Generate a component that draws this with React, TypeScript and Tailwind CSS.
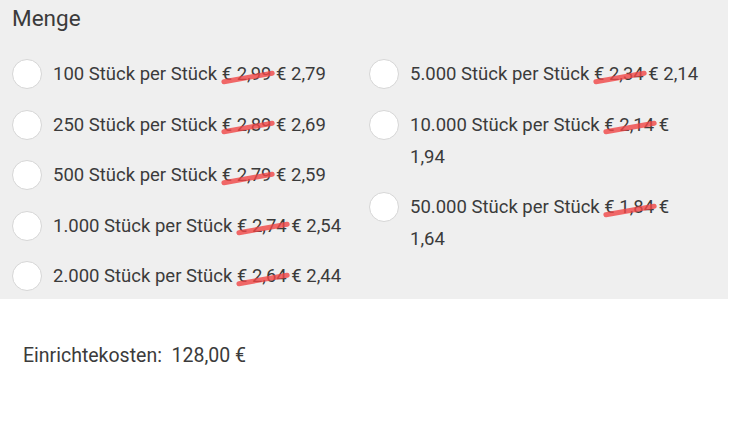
import React from 'react';

type Tier = { qty: string; old: string; price: string };

const LEFT: Tier[] = [
    { qty: '100', old: '2,99', price: '2,79' },
    { qty: '250', old: '2,89', price: '2,69' },
    { qty: '500', old: '2,79', price: '2,59' },
    { qty: '1.000', old: '2,74', price: '2,54' },
    { qty: '2.000', old: '2,64', price: '2,44' },
];

const RIGHT: Tier[] = [
    { qty: '5.000', old: '2,34', price: '2,14' },
    { qty: '10.000', old: '2,14', price: '1,94' },
    { qty: '50.000', old: '1,84', price: '1,64' },
];

const TierOption: React.FC<{ tier: Tier }> = ({ tier }) => (
    <label className="flex items-start gap-[11px] cursor-pointer">
        <span className="mt-px w-[30px] h-[30px] shrink-0 rounded-full bg-white border border-[#d6d6d6]" />
        <span className="leading-[32px] max-w-[296px]">
            {tier.qty} Stück per Stück{' '}
            <span className="relative inline-block">
                € {tier.old}
                <span className="absolute left-[-1px] right-[-3px] top-[52%] h-[4.5px] rounded-full bg-[#f04545]/80 -rotate-[10deg]" />
            </span>{' '}
            € {tier.price}
        </span>
    </label>
);

const App: React.FC = () => {
    return (
        <div className="w-[730px] h-[425px] bg-white text-[#3b3b3b] text-[18.5px] font-['Roboto',sans-serif]">

            {/* Quantity selection */}
            <div className="w-[728px] h-[299px] bg-[#efefef] pl-3 pt-[5px]">
                <h2 className="text-[22.5px] leading-[26px]">Menge</h2>
                <div className="grid grid-cols-[357px_1fr] mt-[27px]">
                    <div className="flex flex-col gap-[18.5px]">
                        {LEFT.map((t) => <TierOption key={t.qty} tier={t} />)}
                    </div>
                    <div className="flex flex-col gap-[18.5px]">
                        {RIGHT.map((t) => <TierOption key={t.qty} tier={t} />)}
                    </div>
                </div>
            </div>

            {/* Setup costs */}
            <div className="pl-[23px] pt-[44px] text-[19.5px] leading-[26px]">
                Einrichtekosten:&nbsp; 128,00 €
            </div>
        </div>
    );
};

export default App;
